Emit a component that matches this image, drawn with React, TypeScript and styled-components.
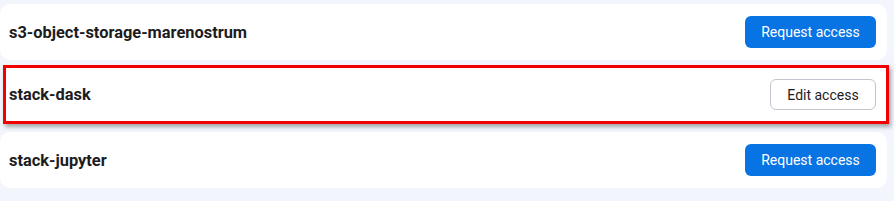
import React from "react";
import styled, { createGlobalStyle } from "styled-components";

const Global = createGlobalStyle`
  html, body { margin: 0; padding: 0; background: #f2f6fc; }
  body { font-family: Roboto, "Liberation Sans", sans-serif; }
`;

const List = styled.div`
  display: flex;
  flex-direction: column;
  gap: 5px;
  padding: 4px 7px 0 0;
  width: 894px;
  box-sizing: border-box;
`;

const Card = styled.div<{ $highlight?: boolean }>`
  display: flex;
  align-items: center;
  justify-content: space-between;
  box-sizing: border-box;
  background: #ffffff;
  border-radius: 10px;
  height: 56px;
  padding: 0 11px 0 9px;
  ${(p) =>
    p.$highlight &&
    `
    border-radius: 0;
    border: 3px solid #f20000;
    margin: 0 -2px 3px 3px;
    height: 59px;
    padding: 0 10px 0 3px;
    box-shadow: 2px 3px 4px rgba(0,0,0,0.32);
  `}
`;

const Name = styled.span`
  font-size: 16.4px;
  font-weight: 700;
  color: #1c1c1e;
`;

const Button = styled.button<{ $variant: "primary" | "outline" }>`
  font-family: Roboto, "Liberation Sans", sans-serif;
  font-size: 14px;
  box-sizing: border-box;
  height: 32px;
  border-radius: 6px;
  cursor: pointer;
  padding: 0 15px;
  ${(p) =>
    p.$variant === "primary"
      ? `
    background: #0874e4;
    color: #ffffff;
    border: none;
    width: 131px;
  `
      : `
    background: #ffffff;
    color: #1c1c1e;
    border: 1px solid #c2c5cd;
    width: 106px;
    height: 31px;
  `}
`;

const items = [
  { name: "s3-object-storage-marenostrum", action: "Request access", variant: "primary" as const },
  { name: "stack-dask", action: "Edit access", variant: "outline" as const, highlight: true },
  { name: "stack-jupyter", action: "Request access", variant: "primary" as const },
];

export default function App() {
  return (
    <>
      <Global />
      <List>
        {items.map((it) => (
          <Card key={it.name} $highlight={it.highlight}>
            <Name>{it.name}</Name>
            <Button $variant={it.variant}>{it.action}</Button>
          </Card>
        ))}
      </List>
    </>
  );
}
